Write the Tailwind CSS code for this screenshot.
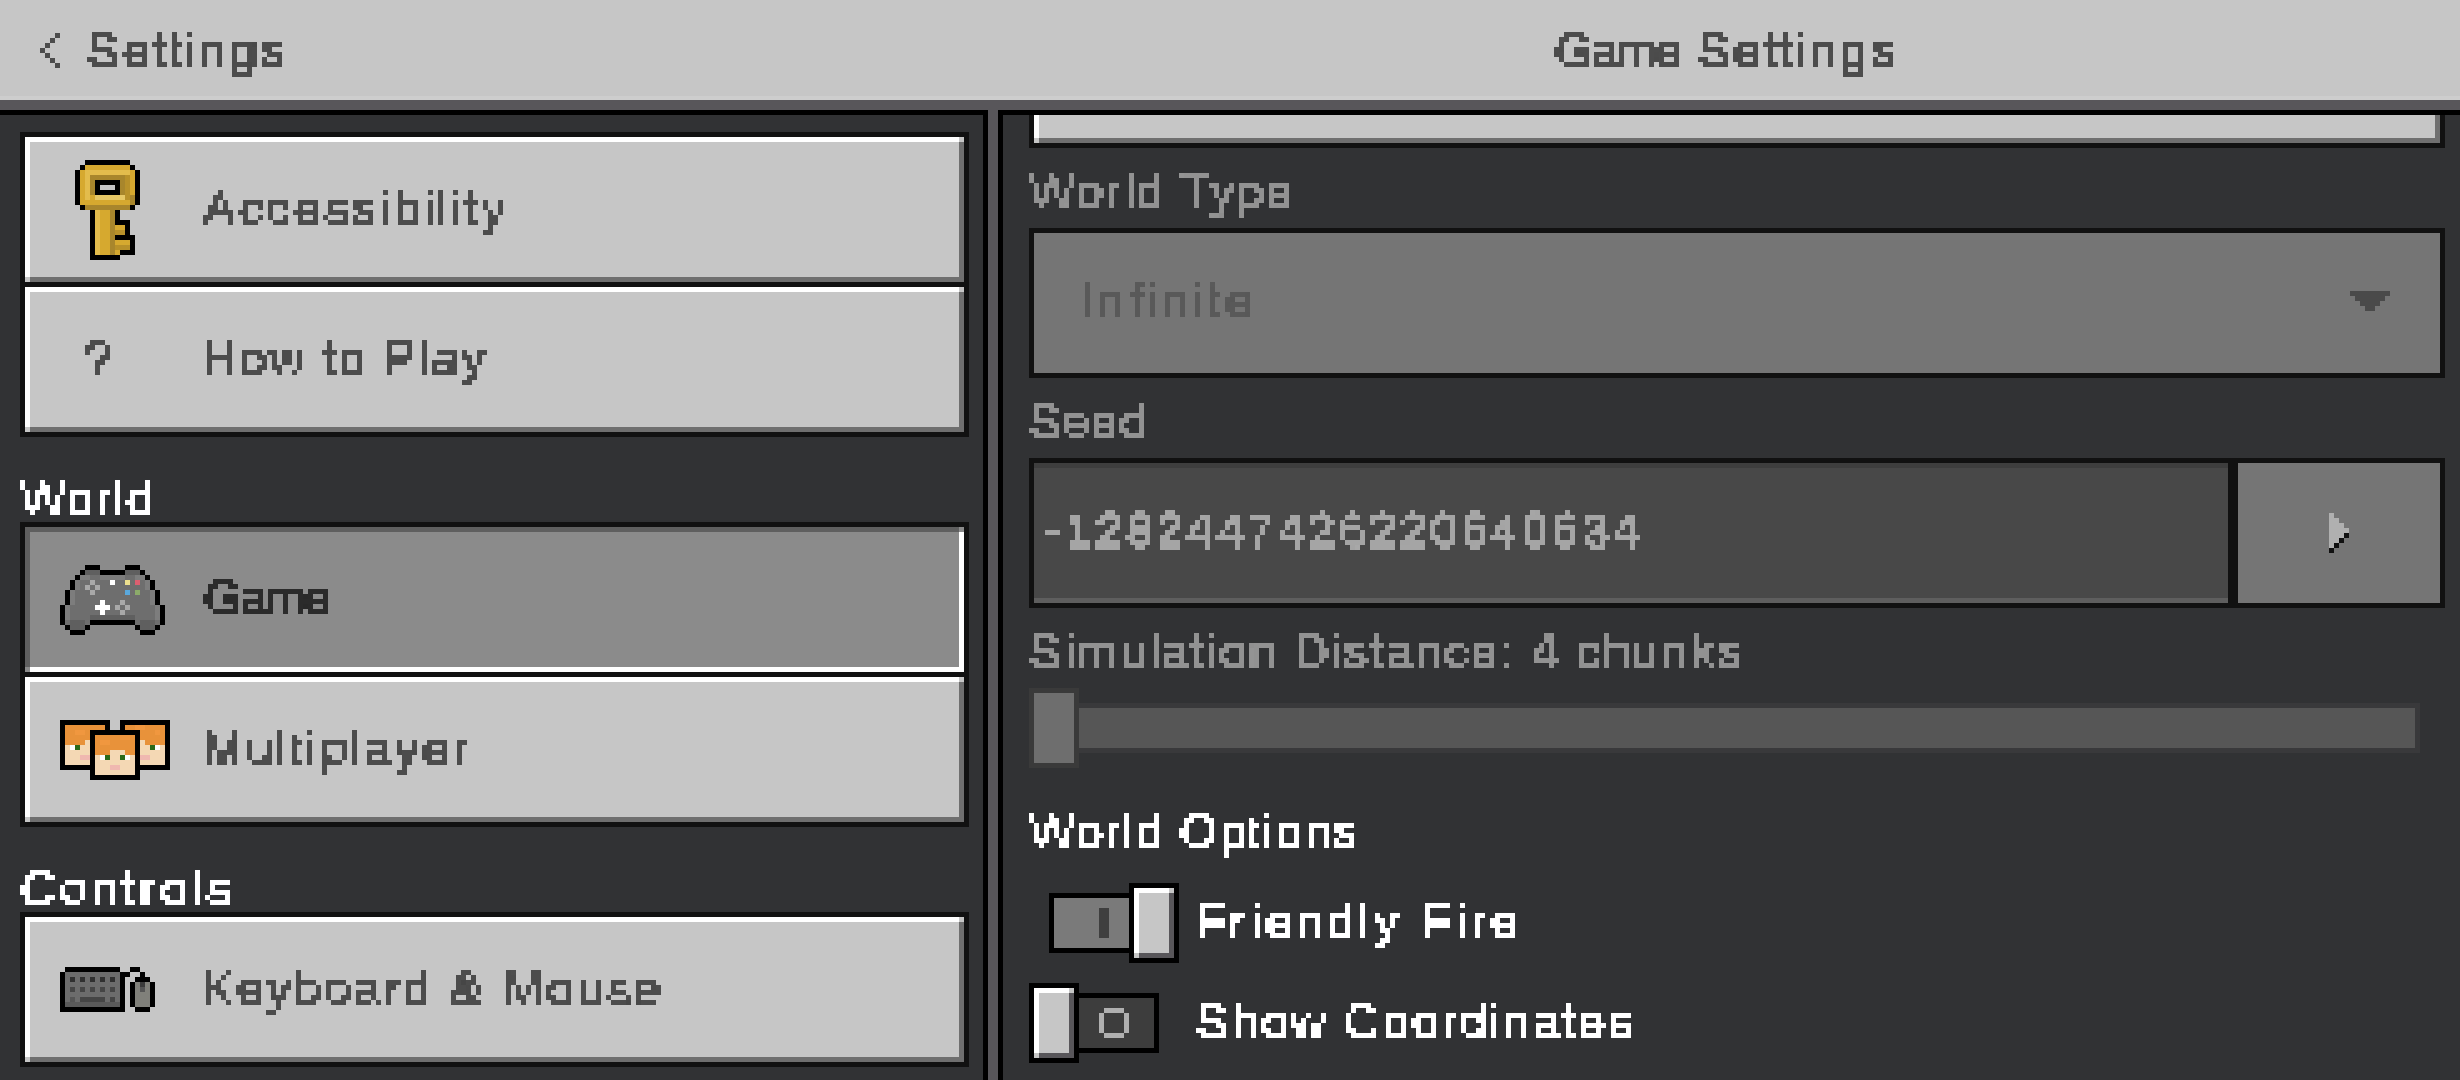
<!DOCTYPE html>
<html><head><meta charset="utf-8"><title>Game Settings</title>
<script src="https://cdn.jsdelivr.net/npm/@tailwindcss/browser@4"></script></head>
<body class="m-0 bg-[#313234] overflow-hidden font-['Liberation_Sans',sans-serif]">
<svg width="0" height="0" class="absolute"><defs>
<filter id="px" x="0" y="0" width="100%" height="100%" color-interpolation-filters="sRGB">
<feMorphology in="SourceGraphic" operator="dilate" radius="0 1" result="d"/>
<feFlood x="2" y="2" width="1" height="1" flood-color="#000"/><feComposite width="5" height="5"/><feTile result="g"/>
<feComposite in="d" in2="g" operator="in"/>
<feComponentTransfer><feFuncA type="discrete" tableValues="0 1 1 1 1 1 1 1 1 1 1 1"/></feComponentTransfer>
<feMorphology operator="dilate" radius="2"/>
</filter></defs></svg>
<div class="w-[2460px] h-[1080px] flex flex-col overflow-hidden text-[49px] leading-[56px] tracking-[3px]">
 <header class="h-[100px] shrink-0 bg-[#c6c6c6] border-b-[4px] border-[#cdcdcd] flex items-start text-[#4c4c4c]">
  <div class="flex items-center ml-[40px] mt-[22px] gap-[27px]">
   <svg width="20" height="35" viewBox="0 0 4 7" shape-rendering="crispEdges" fill="#4c4c4c"><path d="M3 0h1v1H3zM2 1h1v1H2zM1 2h1v1H1zM0 3h1v1H0zM1 4h1v1H1zM2 5h1v1H2zM3 6h1v1H3z"/></svg>
   <span class="[filter:url(#px)]">Settings</span>
  </div>
  <div class="ml-[1266px] mt-[22px] flex"><span class="[filter:url(#px)] tracking-[-2px] mr-[18px]">Game</span><span class="[filter:url(#px)]">Settings</span></div>
 </header>
 <div class="h-[10px] shrink-0 bg-[#58565a]"></div>
 <div class="flex flex-1 min-h-0">
  <aside class="w-[988px] shrink-0 border-t-[5px] border-r-[5px] border-black pl-[20px] pr-[14px] pt-[17px] flex flex-col overflow-hidden text-[#4c4c4c]">
   <div class="relative h-[155px] shrink-0 border-[5px] border-[#111] bg-[#c6c6c6] shadow-[inset_5px_5px_0_#fff,inset_-5px_-5px_0_#6f6f6f] flex items-center">
    <span class="absolute right-0 top-0 w-[5px] h-[5px] bg-[#c6c6c6]"></span><span class="absolute left-0 bottom-0 w-[5px] h-[5px] bg-[#c6c6c6]"></span>
    <svg class="ml-[50px] mr-[63px] shrink-0" width="65" height="100" viewBox="0 0 13 20" shape-rendering="crispEdges"><path fill="#000" d="M2 0h9v1h1v1h1v7h-1v1H9v2h2v3h1v4H9v1H3V10H1V9H0V2h1V1h1z"/><path fill="#d6a92f" d="M2 1h9v1h1v7h-1v1H8v3h2v2H8v1h3v2H9v1H4V10H2V9H1V2h1z"/><path fill="#e3bc4c" d="M2 2h9v1H2zM2 3h1v5H2zM4 10h1v9H4z"/><path fill="#a8862c" d="M3 3h7v4H3zM11 7h1v2h-1zM2 9h9v1H2zM7 10h1v9H7z"/><path fill="#e6c766" d="M4 7h6v1H4z"/><path fill="#b8912a" d="M8 14h2v1H8zM8 17h3v1H8zM10 3h1v5h-1z"/><path fill="#000" d="M4 4h5v3H4z"/><path fill="#c6c6c6" d="M5 5h3v1H5z"/></svg>
    <span class="[filter:url(#px)] mb-[4px]">Accessibility</span>
   </div>
   <div class="relative h-[155px] -mt-[5px] shrink-0 border-[5px] border-[#111] bg-[#c6c6c6] shadow-[inset_5px_5px_0_#fff,inset_-5px_-5px_0_#6f6f6f] flex items-center">
    <span class="absolute right-0 top-0 w-[5px] h-[5px] bg-[#c6c6c6]"></span><span class="absolute left-0 bottom-0 w-[5px] h-[5px] bg-[#c6c6c6]"></span>
    <span class="w-[117px] ml-[60px] shrink-0 mb-[4px]"><span class="[filter:url(#px)] inline-block">?</span></span>
    <span class="[filter:url(#px)] mb-[4px] tracking-[2.2px]">How to Play</span>
   </div>
   <div class="mt-[33px] h-[52px] shrink-0 text-white [filter:url(#px)] tracking-[1.5px]">World</div>
   <div class="relative h-[155px] shrink-0 border-[5px] border-[#111] bg-[#8b8b8b] shadow-[inset_5px_5px_0_#5f5f5f,inset_-5px_-5px_0_#fff] flex items-center text-[#2b2b2b]">
    <span class="absolute right-0 top-0 w-[5px] h-[5px] bg-[#8b8b8b]"></span><span class="absolute left-0 bottom-0 w-[5px] h-[5px] bg-[#8b8b8b]"></span>
    <svg class="ml-[35px] mr-[38px] shrink-0" width="105" height="70" viewBox="0 0 21 14" shape-rendering="crispEdges"><path fill="#6e6e6e" d="M5 1h3v1h5V1h3v1h1v1h1v2h1v3h1v4h-1v1h-3v-1h-1v-1H6v1H5v1H2v-1H1V8h1V5h1V3h1V2h1z"/><path fill="#5f5f5f" d="M5 1h3v1H5zM13 1h3v1h-3zM6 10h9v1H6zM2 11h3v2H2zM16 11h3v2h-3z"/><path fill="#7d7d7d" d="M4 2h2v1H4zM8 2h5v1H8zM15 2h2v1h-2zM3 3h1v2H3zM17 3h1v2h-1zM2 5h1v3H2zM18 5h1v3h-1zM1 8h1v3H1zM19 8h1v3h-1z"/><path fill="#000" d="M5 0h3v1H5zM13 0h3v1h-3zM4 1h1v1H4zM8 1h5v1H8zM16 1h1v1h-1zM3 2h1v1H3zM17 2h1v1h-1zM2 3h1v2H2zM18 3h1v2h-1zM1 5h1v3H1zM19 5h1v3h-1zM0 8h1v4H0zM20 8h1v4h-1zM6 11h9v1H6zM1 12h1v1H1zM5 12h1v1H5zM15 12h1v1h-1zM19 12h1v1h-1zM2 13h3v1H2zM16 13h3v1h-3z"/><path fill="#a8a8a8" d="M6 3h1v1H6zM5 4h1v1H5zM7 4h1v1H7zM6 5h1v1H6zM12 7h1v1h-1zM11 8h1v1h-1zM13 8h1v1h-1zM12 9h1v1h-1z"/><path fill="#fff" d="M10 3h1v1h-1zM8 7h1v3H8zM7 8h3v1H7z"/><path fill="#ecdf8e" d="M13 3h1v1h-1z"/><path fill="#dc5f70" d="M15 3h1v1h-1z"/><path fill="#5aa8dc" d="M13 5h1v1h-1z"/><path fill="#8cab6a" d="M15 5h1v1h-1z"/></svg>
    <span class="[filter:url(#px)] mb-[5px] tracking-[-2px]">Game</span>
   </div>
   <div class="relative h-[155px] -mt-[5px] shrink-0 border-[5px] border-[#111] bg-[#c6c6c6] shadow-[inset_5px_5px_0_#fff,inset_-5px_-5px_0_#6f6f6f] flex items-center">
    <span class="absolute right-0 top-0 w-[5px] h-[5px] bg-[#c6c6c6]"></span><span class="absolute left-0 bottom-0 w-[5px] h-[5px] bg-[#c6c6c6]"></span>
    <svg class="ml-[35px] mr-[32px] shrink-0" width="110" height="60" viewBox="0 0 22 12" shape-rendering="crispEdges"><path fill="#000" d="M0 0h10v10H0zM12 0h10v10H12z"/><path fill="#f4d8b4" d="M1 1h8v8H1zM13 1h8v8h-8z"/><path fill="#e8923a" d="M1 1h8v3H1zM1 4h4v1H1zM13 1h8v3h-8zM17 4h4v1h-4z"/><path fill="#f0973f" d="M3 2h2v1H3zM15 1h2v1h-2zM19 2h1v1h-1z"/><path fill="#fff" d="M2 5h1v1H2zM19 5h1v1h-1z"/><path fill="#2c6a1a" d="M3 5h1v1H3zM18 5h1v1h-1z"/><path fill="#f0b8b0" d="M4 7h2v1H4zM16 7h2v1h-2z"/><path fill="#000" d="M6 2h10v10H6z"/><path fill="#f4d8b4" d="M7 3h8v8H7z"/><path fill="#e8923a" d="M7 3h8v3H7zM7 6h3v1H7zM13 6h2v1h-2z"/><path fill="#f0973f" d="M8 4h2v1H8zM12 3h2v1h-2z"/><path fill="#fff" d="M8 7h1v1H8zM13 7h1v1h-1z"/><path fill="#2c6a1a" d="M9 7h1v1H9zM12 7h1v1h-1z"/><path fill="#f0b8b0" d="M10 9h2v1h-2z"/></svg>
    <span class="[filter:url(#px)] mb-[4px]">Multiplayer</span>
   </div>
   <div class="mt-[33px] h-[52px] shrink-0 text-white [filter:url(#px)] tracking-[4px]">Controls</div>
   <div class="relative h-[155px] shrink-0 border-[5px] border-[#111] bg-[#c6c6c6] shadow-[inset_5px_5px_0_#fff,inset_-5px_-5px_0_#6f6f6f] flex items-center">
    <span class="absolute right-0 top-0 w-[5px] h-[5px] bg-[#c6c6c6]"></span><span class="absolute left-0 bottom-0 w-[5px] h-[5px] bg-[#c6c6c6]"></span>
    <svg class="ml-[35px] mr-[46px] shrink-0" width="95" height="45" viewBox="0 0 19 9" shape-rendering="crispEdges"><path fill="#000" d="M1 0h11v1H1zM0 1h13v8H0zM12 1h2v1h-2zM14 0h2v1h-2zM16 1h1v1h-1zM15 2h3v1h-3zM14 3h1v5h-1zM18 3h1v5h-1zM15 8h3v1h-3z"/><path fill="#6c6c6c" d="M1 1h11v6H1z"/><path fill="#5a5a5a" d="M1 7h11v1H1z"/><path fill="#303030" d="M2 2h1v1H2zM4 2h1v1H4zM6 2h1v1H6zM8 2h1v1H8zM10 2h1v1h-1z"/><path fill="#454545" d="M2 4h1v1H2zM4 4h1v1H4zM6 4h1v1H6zM8 4h1v1H8zM10 4h1v1h-1zM4 6h5v1H4zM10 6h1v1h-1z"/><path fill="#555" d="M2 6h1v1H2z"/><path fill="#80807a" d="M15 3h3v5h-3z"/><path fill="#3a3a3a" d="M16 3h1v1h-1z"/><path fill="#555" d="M16 4h1v1h-1z"/></svg>
    <span class="[filter:url(#px)] mb-[4px] tracking-[2.9px]">Keyboard &amp; Mouse</span>
   </div>
  </aside>
  <div class="w-[10px] shrink-0 bg-[#58565a]"></div>
  <main class="flex-1 min-w-0 border-t-[5px] border-l-[5px] border-black pl-[26px] pr-[15px] flex flex-col">
   <div class="relative h-[33px] shrink-0 border-[5px] border-t-0 border-[#111] bg-[#c6c6c6] shadow-[inset_5px_0_0_#fff,inset_-5px_-5px_0_#6f6f6f]"><span class="absolute left-0 bottom-0 w-[5px] h-[5px] bg-[#c6c6c6]"></span></div>
   <div class="mt-[15px] h-[56px] shrink-0 text-[#929292] tracking-[2px]"><span class="[filter:url(#px)] inline-block">World Type</span></div>
   <div class="mt-[9px] h-[150px] shrink-0 border-[5px] border-[#111] bg-[#757575] flex items-center justify-between pl-[46px] pr-[50px] text-[#595959]">
    <span class="[filter:url(#px)] mb-[6px] tracking-[4px]">Infinite</span>
    <svg class="mb-[4px]" width="40" height="20" viewBox="0 0 8 4" shape-rendering="crispEdges" fill="#4a4a4a"><path d="M0 0h8v1H0zM1 1h6v1H1zM2 2h4v1H2zM3 3h2v1H3z"/></svg>
   </div>
   <div class="mt-[15px] h-[56px] shrink-0 text-[#929292] tracking-[1px]"><span class="[filter:url(#px)] inline-block">Seed</span></div>
   <div class="mt-[9px] h-[150px] shrink-0 border-[5px] border-[#111] flex bg-[#111]">
    <div class="flex-1 bg-[#484848] shadow-[inset_0_5px_0_#3e3e3e,inset_0_-5px_0_#5e5e5e] pl-[11px] flex items-center text-[#a5a5a5]"><span class="[filter:url(#px)] mb-[8px] pt-[2px] tracking-[3.2px]">-12824474262206406<span class="relative top-[1px]">3</span>4</span></div>
    <div class="w-[202px] ml-[10px] shrink-0 bg-[#757575] flex items-center justify-center">
     <svg width="20" height="40" viewBox="0 0 4 8" shape-rendering="crispEdges"><path fill="#b0b0b0" d="M0 0h1v1h1v1h1v1h1v1H3v1H2v1H1v1H0z"/><path fill="#111" d="M0 7h1v1H0zM1 6h1v1H1zM2 5h1v1H2zM3 4h1v1H3z"/></svg>
    </div>
   </div>
   <div class="mt-[15px] h-[56px] shrink-0 text-[#929292] tracking-[2px]"><span class="[filter:url(#px)] inline-block">Simulation Distance: 4 chunks</span></div>
   <div class="mt-[9px] h-[80px] shrink-0 flex items-center mr-[25px]">
    <div class="w-[50px] h-[80px] shrink-0 border-[5px] border-[#3a3a3a] bg-[#6e6e6e]"></div>
    <div class="flex-1 h-[50px] border-y-[5px] border-r-[5px] border-[#39393b] bg-[#565656]"></div>
   </div>
   <div class="mt-[35px] h-[56px] shrink-0 text-white tracking-[1.6px]"><span class="[filter:url(#px)] inline-block">World Options</span></div>
   <div class="mt-[24px] h-[80px] shrink-0 flex items-center pl-[20px]">
    <div class="w-[80px] h-[60px] shrink-0 border-[5px] border-r-0 border-black bg-[#7a7a7a] flex items-center pl-[45px]"><span class="w-[10px] h-[30px] bg-[#3f3f3f]"></span></div>
    <div class="relative w-[50px] h-[80px] shrink-0 border-[5px] border-black bg-[#c6c6c6] shadow-[inset_5px_5px_0_#fff,inset_-5px_-5px_0_#58565a]"><span class="absolute right-0 top-0 w-[5px] h-[5px] bg-[#c6c6c6]"></span><span class="absolute left-0 bottom-0 w-[5px] h-[5px] bg-[#c6c6c6]"></span></div>
    <span class="ml-[16px] mb-[5px] text-white tracking-[4.2px] [filter:url(#px)]">Friendly Fire</span>
   </div>
   <div class="mt-[20px] h-[80px] shrink-0 flex items-center">
    <div class="relative w-[50px] h-[80px] shrink-0 border-[5px] border-black bg-[#c6c6c6] shadow-[inset_5px_5px_0_#fff,inset_-5px_-5px_0_#58565a]"><span class="absolute right-0 top-0 w-[5px] h-[5px] bg-[#c6c6c6]"></span><span class="absolute left-0 bottom-0 w-[5px] h-[5px] bg-[#c6c6c6]"></span></div>
    <div class="w-[80px] h-[60px] shrink-0 border-[5px] border-l-0 border-black bg-[#3d3d3d] flex items-center pl-[20px]"><svg width="30" height="30" viewBox="0 0 6 6" shape-rendering="crispEdges" fill="#b0b0b0"><path d="M1 0h4v1H1zM0 1h1v4H0zM5 1h1v4H5zM1 5h4v1H1z"/></svg></div>
    <span class="ml-[37px] mb-[5px] text-white tracking-[2.4px] [filter:url(#px)]">Show Coordinates</span>
   </div>
  </main>
 </div>
</div>
</body></html>
